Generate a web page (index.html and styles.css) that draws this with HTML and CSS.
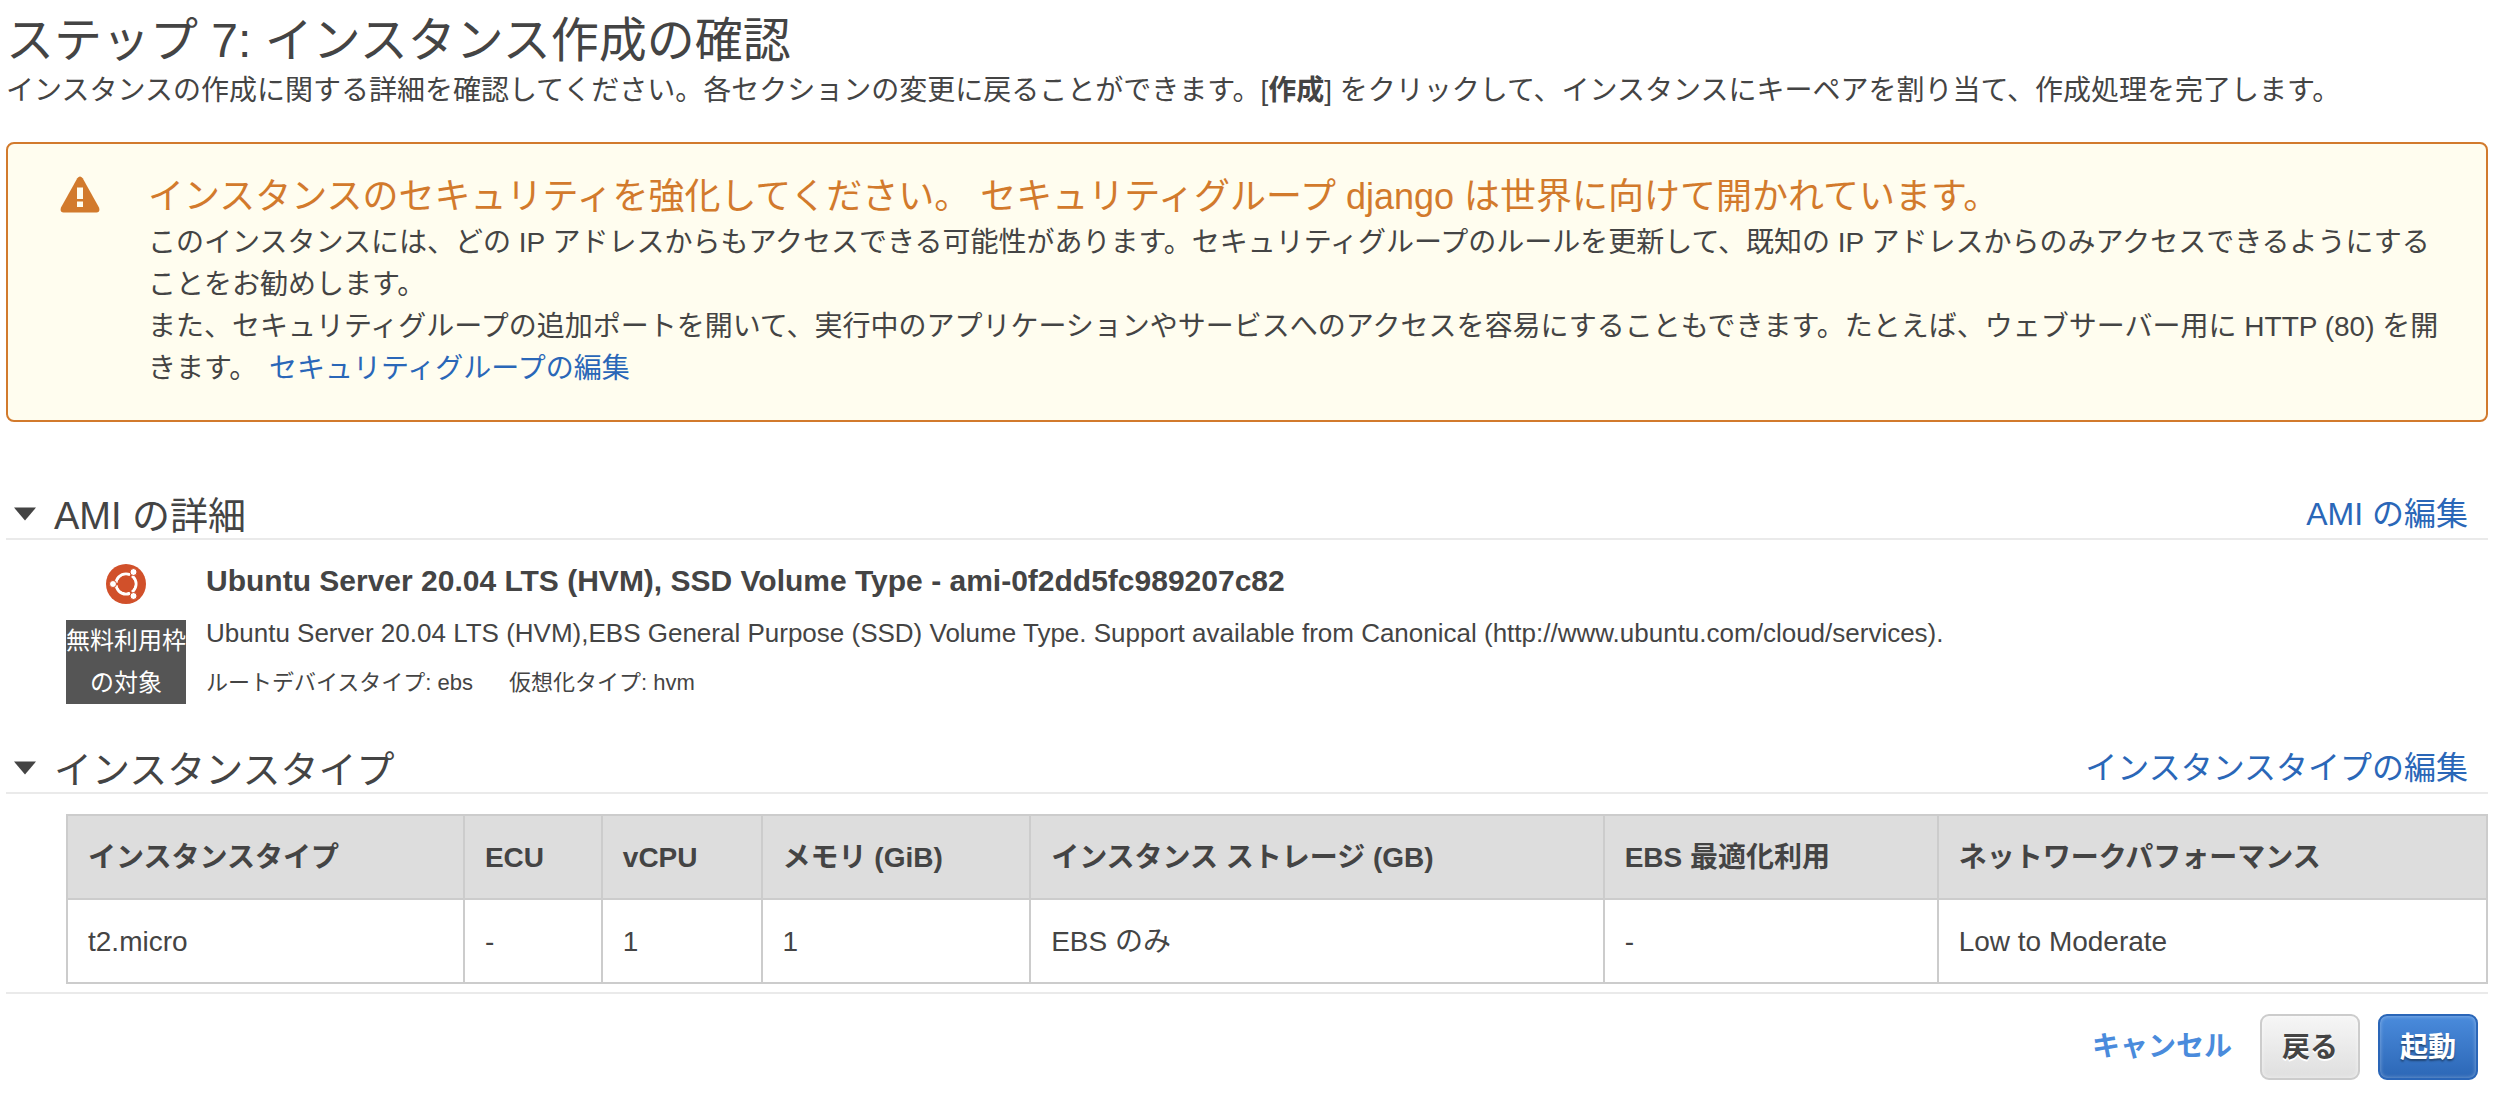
FILE: index.html
```html
<!DOCTYPE html>
<html lang="ja">
<head>
<meta charset="utf-8">
<meta name="viewport" content="width=device-width, initial-scale=1">
<title>ステップ 7: インスタンス作成の確認</title>
<link rel="stylesheet" href="styles.css">
</head>
<body>
<main class="wizard">
  <header class="intro">
    <h1 class="intro-title">ステップ 7: インスタンス作成の確認</h1>
    <p class="intro-text">インスタンスの作成に関する詳細を確認してください。各セクションの変更に戻ることができます。[<b>作成</b>] をクリックして、インスタンスにキーペアを割り当て、作成処理を完了します。</p>
  </header>

  <section class="alert">
    <svg class="alert-icon" viewBox="0 0 40 37" aria-hidden="true">
      <path fill="#d27a2c" d="M17.300 2.200Q20 -1.400 22.700 2.200L39 31.500Q40.500 36 36.500 36.500H3.500Q-.5 36 1 31.500Z"/>
      <path fill="#fffdef" d="M17 11.500h6V23h-6zM17 25.500h6v5.500h-6z"/>
    </svg>
    <div class="alert-body">
      <h2 class="alert-title">インスタンスのセキュリティを強化してください。 セキュリティグループ django は世界に向けて開かれています。</h2>
      <p class="alert-text">このインスタンスには、どの IP アドレスからもアクセスできる可能性があります。セキュリティグループのルールを更新して、既知の IP アドレスからのみアクセスできるようにすることをお勧めします。</p>
      <p class="alert-text">また、セキュリティグループの追加ポートを開いて、実行中のアプリケーションやサービスへのアクセスを容易にすることもできます。たとえば、ウェブサーバー用に HTTP (80) を開きます。 <a class="link alert-link" href="#security">セキュリティグループの編集</a></p>
    </div>
  </section>

  <section class="section section-ami">
    <div class="section-head">
      <svg class="caret" viewBox="0 0 24 14" aria-hidden="true"><path fill="#444" d="M0 0h24L12 14z"/></svg>
      <h2 class="section-title">AMI の詳細</h2>
      <a class="link section-link" href="#ami">AMI の編集</a>
    </div>
    <div class="ami">
      <div class="ami-side">
        <svg class="ami-logo" viewBox="0 0 40 40" aria-hidden="true">
          <circle cx="20" cy="20" r="20" fill="#d1502a"/>
          <circle cx="20" cy="20" r="10" fill="none" stroke="#fff" stroke-width="3"/>
          <path stroke="#d1502a" stroke-width="2" d="M20 20H6M20 20l7-12M20 20l7 12"/>
          <g fill="#fff" stroke="#d1502a" stroke-width="1">
            <circle cx="7" cy="20" r="3.500"/>
            <circle cx="27.500" cy="8" r="3.500"/>
            <circle cx="27.500" cy="32" r="3.500"/>
          </g>
          <circle cx="20" cy="20" r="8.500" fill="#d1502a"/>
        </svg>
        <span class="badge">無料利用枠の対象</span>
      </div>
      <div class="ami-info">
        <h3 class="ami-name">Ubuntu Server 20.04 LTS (HVM), SSD Volume Type - ami-0f2dd5fc989207c82</h3>
        <p class="ami-desc">Ubuntu Server 20.04 LTS (HVM),EBS General Purpose (SSD) Volume Type. Support available from Canonical (http://www.ubuntu.com/cloud/services).</p>
        <p class="ami-meta"><span>ルートデバイスタイプ: ebs</span><span>仮想化タイプ: hvm</span></p>
      </div>
    </div>
  </section>

  <section class="section section-type">
    <div class="section-head">
      <svg class="caret" viewBox="0 0 24 14" aria-hidden="true"><path fill="#444" d="M0 0h24L12 14z"/></svg>
      <h2 class="section-title">インスタンスタイプ</h2>
      <a class="link section-link" href="#type">インスタンスタイプの編集</a>
    </div>
    <div class="table-wrap">
      <table class="types">
        <colgroup>
          <col class="col-type"><col class="col-ecu"><col class="col-cpu"><col class="col-memory"><col class="col-storage"><col class="col-ebs"><col>
        </colgroup>
        <thead>
          <tr><th scope="col">インスタンスタイプ</th><th scope="col">ECU</th><th scope="col">vCPU</th><th scope="col">メモリ (GiB)</th><th scope="col">インスタンス ストレージ (GB)</th><th scope="col">EBS 最適化利用</th><th scope="col">ネットワークパフォーマンス</th></tr>
        </thead>
        <tbody>
          <tr><td>t2.micro</td><td>-</td><td>1</td><td>1</td><td>EBS のみ</td><td>-</td><td>Low to Moderate</td></tr>
        </tbody>
      </table>
    </div>
  </section>

  <footer class="actions">
    <a class="cancel" href="#cancel">キャンセル</a>
    <button class="btn" type="button">戻る</button>
    <button class="btn btn-primary" type="button">起動</button>
  </footer>
</main>
</body>
</html>
```
FILE: styles.css
```css
* {
  box-sizing: border-box;
}

body {
  margin: 0;
  background: #fff;
  color: #444;
  font: 28px/42px "Liberation Sans", "Noto Sans CJK JP", sans-serif;
}

h1, h2, h3, p {
  margin: 0;
  font-weight: normal;
}

.wizard {
  padding: 12px 12px 16px 6px;
}

.intro-title {
  font-size: 48px;
  line-height: 58px;
}

.link {
  color: #2a67b8;
  text-decoration: none;
}

.alert {
  display: flex;
  gap: 48px;
  margin-top: 30px;
  padding: 32px 40px 30px 52px;
  border: 2px solid #d27a2c;
  border-radius: 8px;
  background: #fffdef;
}

.alert-icon {
  flex: none;
  width: 40px;
  height: 37px;
}

.alert-body {
  flex: 1;
}

.alert-title {
  margin-bottom: 4px;
  color: #d27a2c;
  font-size: 36px;
  line-height: 42px;
}

.alert-link {
  margin-left: 4px;
}

.section-ami {
  margin-top: 68px;
}

.section-type {
  margin-top: 40px;
}

.section-head {
  display: flex;
  align-items: center;
  padding: 0 20px 0 8px;
  border-bottom: 2px solid #eaeaea;
}

.caret {
  flex: none;
  width: 22px;
  height: 14px;
}

.section-title {
  margin-left: 18px;
  padding-top: 4px;
  font-size: 38px;
  line-height: 44px;
}

.section-link {
  margin-left: auto;
  font-size: 32px;
}

.ami {
  display: flex;
  gap: 20px;
  padding: 20px 0 0 60px;
}

.ami-side {
  display: flex;
  flex-direction: column;
  align-items: center;
  gap: 16px;
  width: 120px;
  padding-top: 4px;
}

.ami-logo {
  width: 40px;
  height: 40px;
}

.badge {
  background: #555;
  color: #fff;
  font-size: 24px;
  text-align: center;
}

.ami-name {
  font-size: 30px;
  font-weight: bold;
}

.ami-desc {
  margin-top: 10px;
  font-size: 26px;
}

.ami-meta {
  display: flex;
  gap: 36px;
  margin-top: 8px;
  font-size: 22px;
}

.table-wrap {
  padding: 20px 0 8px 60px;
  border-bottom: 2px solid #eaeaea;
}

.types {
  width: 100%;
  border-collapse: collapse;
  table-layout: fixed;
}

.types th,
.types td {
  height: 84px;
  padding: 2px 20px 0;
  border: 2px solid #ccc;
  text-align: left;
}

.types th {
  background: #ddd;
}

.col-type { width: 16.4%; }
.col-ecu { width: 5.7%; }
.col-cpu { width: 6.6%; }
.col-memory { width: 11.1%; }
.col-storage { width: 23.7%; }
.col-ebs { width: 13.8%; }

.actions {
  display: flex;
  justify-content: flex-end;
  align-items: center;
  gap: 18px;
  padding: 20px 10px 0 0;
}

.cancel {
  margin-right: 10px;
  color: #4a8bdc;
  font-weight: bold;
  text-decoration: none;
}

.btn {
  height: 66px;
  padding: 2px 20px 0;
  border: 2px solid #ccc;
  border-radius: 9px;
  background: linear-gradient(#f6f6f6, #dfdfdf);
  box-shadow: inset 0 0 4px rgba(255, 255, 255, 0.6);
  color: #444;
  font: bold 28px/42px "Liberation Sans", "Noto Sans CJK JP", sans-serif;
  text-shadow: 0 2px 0 #fff;
}

.btn-primary {
  border-color: #2a66b8;
  background: linear-gradient(#4a8bdc, #2c67b6);
  box-shadow: inset 0 0 4px rgba(255, 255, 255, 0.4);
  color: #fff;
  text-shadow: 0 2px 2px rgba(0, 0, 0, 0.4);
}
```
